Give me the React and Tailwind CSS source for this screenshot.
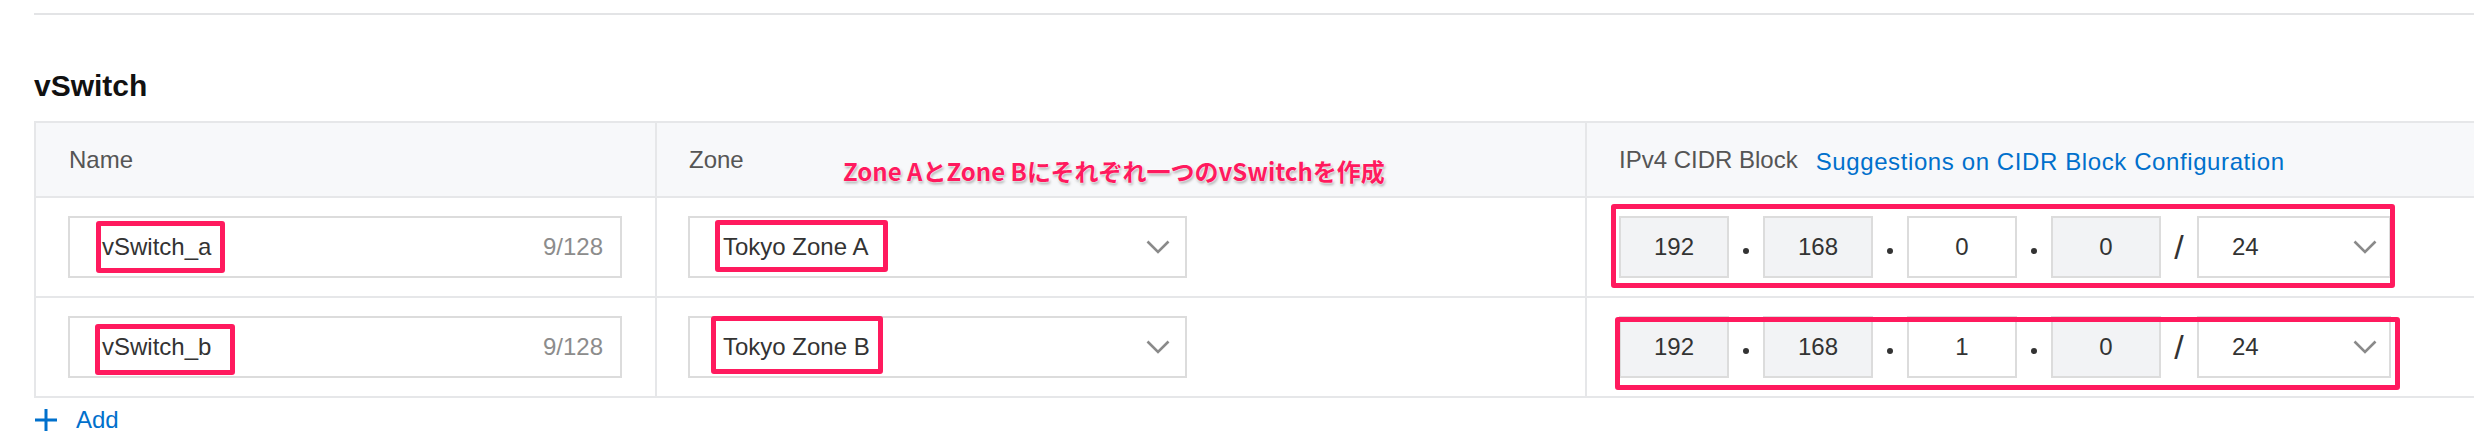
import React from 'react';

const font = { fontFamily: '"Liberation Sans", Arial, "Noto Sans CJK JP", sans-serif' };

const Chevron = () => (
  <svg width="24" height="14" viewBox="0 0 24 14" fill="none" className="shrink-0">
    <path d="M1.5 1.5 L12 12 L22.5 1.5" stroke="#8a8a8a" strokeWidth="2.6" />
  </svg>
);

// hand-drawn highlight from the screenshot
const Mark = ({ className }) => (
  <div className={`absolute border-[5px] border-[#ff1a5e] rounded-[3px] pointer-events-none ${className}`} />
);

const NameInput = ({ value, mark }) => (
  <div className="relative w-[554px] h-[62px] border-2 border-[#dcdcdc] bg-white flex items-center justify-between pl-[32px] pr-[17px]">
    <span className="text-[24px] text-[#333]">{value}</span>
    <span className="text-[24px] text-[#8c8c8c]">9/128</span>
    <Mark className={mark} />
  </div>
);

const ZoneSelect = ({ value, mark }) => (
  <div className="relative w-[499px] h-[62px] border-2 border-[#dcdcdc] bg-white flex items-center justify-between pl-[33px] pr-[15px]">
    <span className="text-[24px] text-[#333]">{value}</span>
    <Chevron />
    <Mark className={mark} />
  </div>
);

const Octet = ({ value, gray }) => (
  <div className={`w-[110px] h-[62px] border-2 border-[#dcdcdc] flex items-center justify-center text-[24px] text-[#333] ${gray ? 'bg-[#f2f3f5]' : 'bg-white'}`}>
    {value}
  </div>
);

const Dot = () => (
  <div className="w-[34px] flex justify-center pt-[8px]">
    <div className="w-[6px] h-[6px] rounded-full bg-[#333]" />
  </div>
);

const Cidr = ({ third }) => (
  <div className="flex items-center">
    <Octet value="192" gray />
    <Dot />
    <Octet value="168" gray />
    <Dot />
    <Octet value={third} />
    <Dot />
    <Octet value="0" gray />
    <div className="w-[36px] flex justify-center text-[34px] leading-none text-[#333]">/</div>
    <div className="w-[194px] h-[62px] border-2 border-[#dcdcdc] bg-white flex items-center justify-between pl-[33px] pr-[12px]">
      <span className="text-[24px] text-[#333]">24</span>
      <Chevron />
    </div>
  </div>
);

const rows = [
  { name: 'vSwitch_a', nameMark: 'left-[26px] top-[3px] w-[129px] h-[52px]', zone: 'Tokyo Zone A', zoneMark: 'left-[25px] top-[2px] w-[173px] h-[52px]', third: '0', cidrMark: 'left-[24px] top-[6px] w-[784px] h-[84px]' },
  { name: 'vSwitch_b', nameMark: 'left-[25px] top-[6px] w-[140px] h-[51px]', zone: 'Tokyo Zone B', zoneMark: 'left-[21px] top-[-2px] w-[172px] h-[58px]', third: '1', cidrMark: 'left-[28px] top-[19px] w-[785px] h-[73px]' },
];

export default function App() {
  return (
    <div className="w-[2474px] h-[442px] bg-white overflow-hidden" style={font}>
      <div className="mt-[13px] ml-[34px] h-[2px] bg-[#e3e4e6]" />

      <h2 className="mt-[53px] ml-[34px] h-[36px] text-[30px] leading-[36px] font-bold text-[#111]">vSwitch</h2>

      <div className="mt-[17px] ml-[34px] border-t-2 border-l-2 border-[#e6e7e9]">
        {/* header */}
        <div className="flex h-[75px] bg-[#f7f8fa] border-b-2 border-[#e6e7e9] text-[24px] text-[#555]">
          <div className="w-[619px] pl-[33px] flex items-center">Name</div>
          <div className="relative w-[930px] border-l-2 border-[#e6e7e9] pl-[32px] flex items-center">
            Zone
            <div
              className="absolute left-[186px] top-[35px] text-[24px] leading-[26px] font-bold text-[#ff1a5e] whitespace-nowrap [text-shadow:0_0_2px_#fff,0_0_2px_#fff,1px_2px_3px_rgba(0,0,0,0.35)]"
              style={{ fontFamily: '"Noto Sans CJK JP", sans-serif' }}
            >
              Zone AとZone Bにそれぞれ一つのvSwitchを作成
            </div>
          </div>
          <div className="flex-1 border-l-2 border-[#e6e7e9] pl-[32px] flex items-center gap-[18px]">
            <span>IPv4 CIDR Block</span>
            <span className="text-[#0070cc] tracking-[0.6px] translate-y-[2px]">Suggestions on CIDR Block Configuration</span>
          </div>
        </div>

        {rows.map((r) => (
          <div key={r.name} className="flex h-[100px] border-b-2 border-[#e6e7e9]">
            <div className="w-[619px] pl-[32px] flex items-center">
              <NameInput value={r.name} mark={r.nameMark} />
            </div>
            <div className="w-[930px] border-l-2 border-[#e6e7e9] pl-[31px] flex items-center">
              <ZoneSelect value={r.zone} mark={r.zoneMark} />
            </div>
            <div className="relative flex-1 border-l-2 border-[#e6e7e9] pl-[32px] flex items-center">
              <Cidr third={r.third} />
              <Mark className={r.cidrMark} />
            </div>
          </div>
        ))}
      </div>

      <div className="mt-[10px] ml-[35px] flex items-center gap-[19px] text-[24px] leading-[24px] text-[#0070cc]">
        <svg width="22" height="22" viewBox="0 0 22 22" className="shrink-0">
          <path d="M11 0 V22 M0 11 H22" stroke="#0070cc" strokeWidth="3" />
        </svg>
        <span>Add</span>
      </div>
    </div>
  );
}
